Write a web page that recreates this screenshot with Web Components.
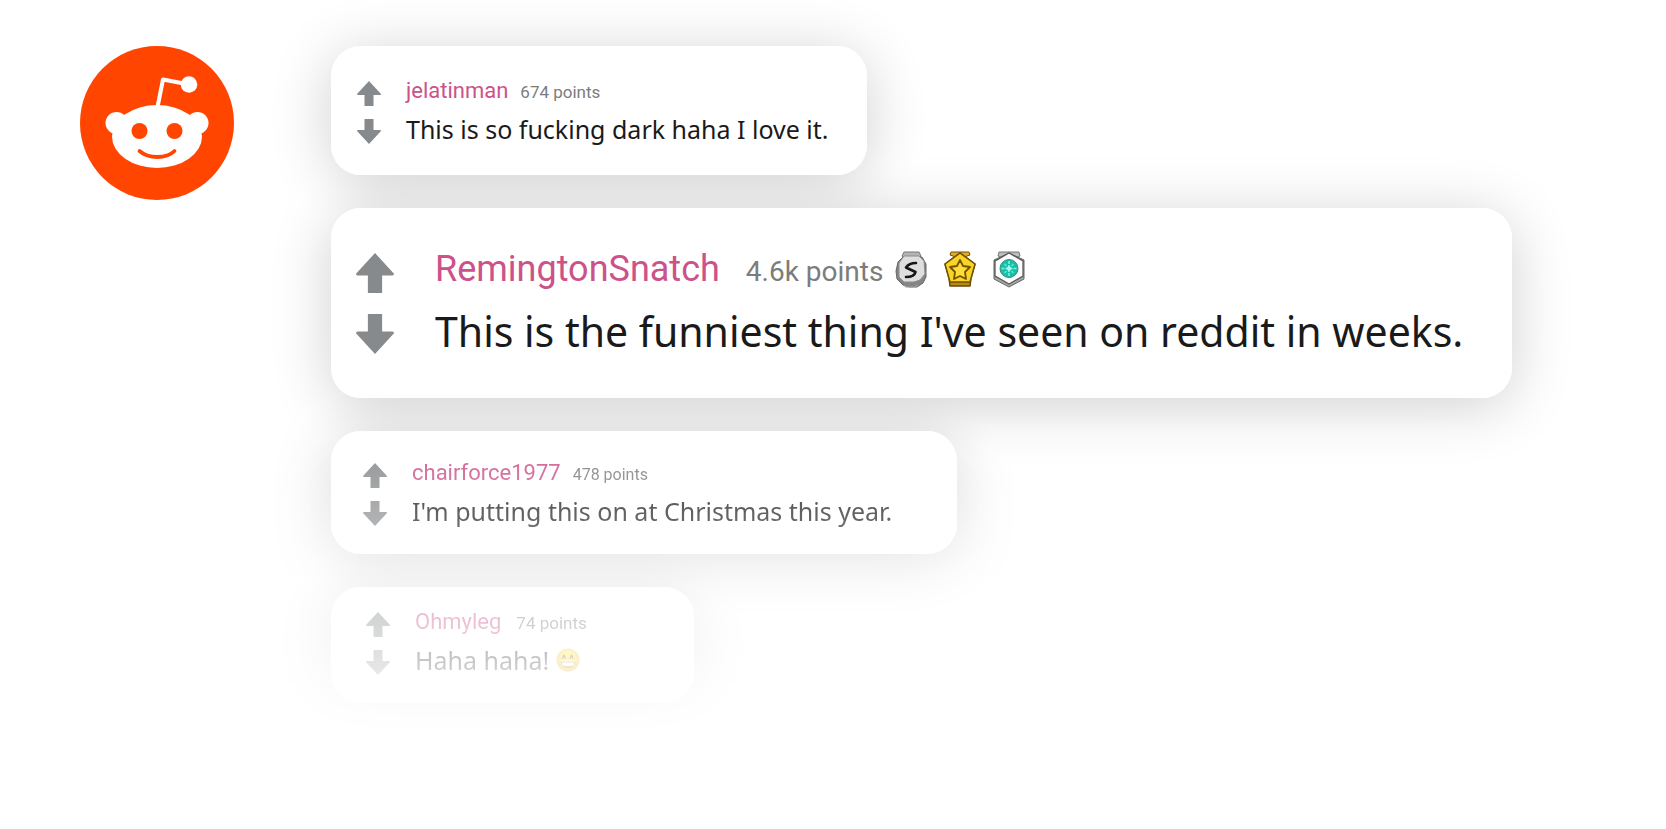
<!DOCTYPE html>
<html lang="en">
<head>
<meta charset="utf-8">
<meta name="viewport" content="width=device-width, initial-scale=1">
<title>Reddit comments</title>
<style>
    body {
        background: #fff;
        margin: 0;
    }
</style>
</head>
<body>
<comment-page>
    <reddit-logo slot="logo"></reddit-logo>
    <reddit-comment author="jelatinman" points="674">This is so fucking dark haha I love it.</reddit-comment>
    <reddit-comment class="featured" author="RemingtonSnatch" points="4.6k">
        <award-badge slot="awards" kind="silver"></award-badge>
        <award-badge slot="awards" kind="gold"></award-badge>
        <award-badge slot="awards" kind="platinum"></award-badge>
        This is the funniest thing I've seen on reddit in weeks.
    </reddit-comment>
    <reddit-comment class="third" author="chairforce1977" points="478">I'm putting this on at Christmas this year.</reddit-comment>
    <reddit-comment class="fourth" author="Ohmyleg" points="74">Haha haha! <grin-emoji></grin-emoji></reddit-comment>
</comment-page>

<script>
class CommentPage extends HTMLElement {
    constructor() {
        super();

        this.renderRoot = this.attachShadow({ mode: 'open' });
    }

    connectedCallback() {
        this.renderRoot.innerHTML = `
            <style>
                :host {
                    display: flex;
                    align-items: flex-start;
                    font-family: "Noto Sans", "Open Sans", sans-serif;
                }

                header {
                    flex: none;
                    padding: 46px 0 0 80px;
                }

                /* the side padding leaves room for the shadows inside the mask */
                main {
                    display: flex;
                    flex: 1;
                    flex-direction: column;
                    align-items: flex-start;
                    gap: 33px;
                    padding: 46px 20px 40px 97px;
                    -webkit-mask-image: linear-gradient(#000 410px, transparent 740px);
                    mask-image: linear-gradient(#000 410px, transparent 740px);
                }

                ::slotted(.featured) {
                    --arrow-width: 38px;
                    --arrow-height: 40px;
                    --arrow-gap: 21px;
                    --gutter: 41px;
                    --name-size: 36px;
                    --name-line: 48px;
                    --meta-gap: 26px;
                    --points-size: 28px;
                    --line-gap: 8px;
                    --text-size: 41px;
                    --text-line: 60px;
                    --card-padding: 37px 49px 37px 25px;
                }

                ::slotted(.third) {
                    --points-size: 16px;
                    --card-padding: 26px 65px 23px 32px;
                }

                ::slotted(.fourth) {
                    --meta-gap: 15px;
                    --card-padding: 19px 107px 23px 35px;
                }
            </style>
            <header><slot name="logo"></slot></header>
            <main><slot></slot></main>
        `;
    }
}

window.customElements.define('comment-page', CommentPage);

class RedditLogo extends HTMLElement {
    constructor() {
        super();

        this.renderRoot = this.attachShadow({ mode: 'open' });
    }

    connectedCallback() {
        this.renderRoot.innerHTML = `
            <style>
                :host {
                    display: block;
                    width: 154px;
                }

                svg {
                    display: block;
                    width: 100%;
                }
            </style>
            <svg viewBox="0 0 154 154" role="img" aria-label="Reddit">
                <circle cx="77" cy="77" r="77" fill="#ff4500"/>
                <g fill="#fff">
                    <circle cx="36.500" cy="77" r="11"/>
                    <circle cx="117.500" cy="77" r="11"/>
                    <ellipse cx="77" cy="90.500" rx="45" ry="31.500"/>
                    <circle cx="109" cy="38.500" r="8.300"/>
                </g>
                <path d="M77.500 61 83 33.500 104 37.500" fill="none" stroke="#fff" stroke-width="4" stroke-linejoin="round"/>
                <g fill="#ff4500">
                    <circle cx="59.500" cy="85" r="8"/>
                    <circle cx="94.500" cy="85" r="8"/>
                </g>
                <path d="M59.500 105c9 8 27 8 35 0" fill="none" stroke="#ff4500" stroke-width="3.800" stroke-linecap="round"/>
            </svg>
        `;
    }
}

window.customElements.define('reddit-logo', RedditLogo);

class RedditComment extends HTMLElement {
    constructor() {
        super();

        this.renderRoot = this.attachShadow({ mode: 'open' });
    }

    connectedCallback() {
        const author = this.getAttribute('author');
        const points = this.getAttribute('points');

        this.renderRoot.innerHTML = `
            <style>
                :host {
                    display: block;
                    position: relative;
                }

                /* shadows sit behind every card, so they never darken a neighbour */
                :host::before {
                    border-radius: 30px;
                    box-shadow: 0 8px 60px rgba(0, 0, 0, .19);
                    content: '';
                    inset: 0;
                    position: absolute;
                    z-index: -1;
                }

                article {
                    display: flex;
                    align-items: center;
                    gap: var(--gutter, 25px);
                    background: #fff;
                    border-radius: 30px;
                    padding: var(--card-padding, 29px 38px 26px 26px);
                }

                .votes {
                    display: flex;
                    flex: none;
                    flex-direction: column;
                    gap: var(--arrow-gap, 13px);
                }

                button {
                    background: none;
                    border: 0;
                    color: #878a8c;
                    cursor: pointer;
                    display: block;
                    height: var(--arrow-height, 25px);
                    padding: 0;
                    width: var(--arrow-width, 24px);
                }

                svg {
                    display: block;
                    height: 100%;
                    width: 100%;
                }

                .meta {
                    display: flex;
                    align-items: baseline;
                    font-family: Roboto, "Liberation Sans", sans-serif;
                    height: var(--name-line, 32px);
                    line-height: var(--name-line, 32px);
                    margin-bottom: var(--line-gap, 2px);
                }

                a {
                    color: #cc5289;
                    font-size: var(--name-size, 22px);
                    text-decoration: none;
                }

                .points {
                    color: #7c7c7c;
                    font-size: var(--points-size, 17px);
                    margin-left: var(--meta-gap, 12px);
                }

                .awards {
                    display: flex;
                    align-self: center;
                }

                p {
                    color: #1a1a1b;
                    font-size: var(--text-size, 25px);
                    line-height: var(--text-line, 40px);
                    margin: 0;
                }
            </style>
            <article>
                <div class="votes">
                    <button type="button" aria-label="Upvote">
                        <svg viewBox="0 0 24 25" preserveAspectRatio="none"><path d="M12 0 24 13q0 1-1 1h-6.500v11h-9V14H1q-1 0-1-1z" fill="currentColor"/></svg>
                    </button>
                    <button type="button" aria-label="Downvote">
                        <svg viewBox="0 0 24 25" preserveAspectRatio="none"><path d="M12 25 24 12q0-1-1-1h-6.500V0h-9v11H1q-1 0-1 1z" fill="currentColor"/></svg>
                    </button>
                </div>
                <div>
                    <div class="meta">
                        <a href="#${author}">${author}</a>
                        <span class="points">${points} points</span>
                        <span class="awards"><slot name="awards"></slot></span>
                    </div>
                    <p><slot></slot></p>
                </div>
            </article>
        `;
    }
}

window.customElements.define('reddit-comment', RedditComment);

const awards = {
    silver: `
        <path d="M9 1h15l2 4-3 3H10L7 5z" fill="#b5b5b5" stroke="#777" stroke-width="1"/>
        <path d="M8 6 3 11 1 20l1 8 6 6 6 2h8l6-4 3-6V13l-4-7z" fill="#858585" stroke="#666" stroke-width="1"/>
        <path d="M9 5h15l5 5 1 13-5 6-6 2H9l-5-5V12z" fill="#dedede" stroke="#8b8b8b" stroke-width="1"/>
        <path d="M21 12q-7 0-10 4.500l9.500 4.500q-1 5-9.500 5" fill="none" stroke="#151515" stroke-width="2.600" stroke-linecap="round" stroke-linejoin="round"/>
        <path d="M10 34v2h10l3-2" fill="none" stroke="#aaa"/>
    `,
    gold: `
        <path d="M7 1h18l1 3-6 2h-8L6 4z" fill="#e4ae24" stroke="#71530d" stroke-width="1"/>
        <path d="M16 2 1 13l4 14 1 8h20l1-8 4-14z" fill="#bc8815" stroke="#674908" stroke-width="1.500" stroke-linejoin="round"/>
        <path d="M16 2 1 13l5 18h20l5-18z" fill="#f9d428" stroke="#705300" stroke-width="1.500" stroke-linejoin="round"/>
        <path d="m16 9 3 6 7 1-5 5 1 7-6-3-6 3 1-7-5-5 7-1z" fill="#ffdc37" stroke="#745200" stroke-width="1.800" stroke-linejoin="round"/>
    `,
    platinum: `
        <path d="M6 1h20l1 4-6 3H11L5 5z" fill="#bdbdbd" stroke="#777" stroke-width="1"/>
        <path d="M16 2 1 9v19l15 8 15-8V9z" fill="#a4a7a8" stroke="#666" stroke-width="1"/>
        <path d="M16 2 2 10v15l14 8 14-8V10z" fill="#fff" stroke="#5b5b5b" stroke-width="1.300"/>
        <circle cx="16" cy="17.500" r="9" fill="#18bfa8" stroke="#2c8f84" stroke-width="1"/>
        <path d="M16 10v15M8.500 17.500h15" stroke="#7df0e2" stroke-width="1.600" stroke-dasharray="3 1"/>
        <path d="m11.500 13 2 2M20.500 13l-2 2M11.500 22l2-2M20.500 22l-2-2" stroke="#5ee5d5" stroke-width="1.600"/>
        <path d="m16 14.500 3 3-3 3-3-3z" fill="#a5fbf0"/>
    `,
};

class AwardBadge extends HTMLElement {
    constructor() {
        super();

        this.renderRoot = this.attachShadow({ mode: 'open' });
    }

    connectedCallback() {
        const kind = this.getAttribute('kind');

        this.renderRoot.innerHTML = `
            <style>
                :host {
                    display: block;
                    height: 37px;
                    margin-left: 16px;
                    width: 33px;
                }

                :host(:first-child) {
                    margin-left: 12px;
                }

                svg {
                    display: block;
                    height: 100%;
                    width: 100%;
                }
            </style>
            <svg viewBox="0 0 33 37" role="img" aria-label="${kind} award">${awards[kind]}</svg>
        `;
    }
}

window.customElements.define('award-badge', AwardBadge);

class GrinEmoji extends HTMLElement {
    constructor() {
        super();

        this.renderRoot = this.attachShadow({ mode: 'open' });
    }

    connectedCallback() {
        this.renderRoot.innerHTML = `
            <style>
                :host {
                    display: inline-block;
                    height: 24px;
                    vertical-align: -2px;
                    width: 24px;
                }

                svg {
                    display: block;
                }
            </style>
            <svg viewBox="0 0 24 24" width="24" height="24" role="img" aria-label="Grinning face">
                <defs>
                    <radialGradient id="face" cx=".5" cy=".4" r=".6">
                        <stop offset=".4" stop-color="#fde030"/>
                        <stop offset="1" stop-color="#f3a21c"/>
                    </radialGradient>
                </defs>
                <circle cx="12" cy="12" r="11.500" fill="url(#face)"/>
                <path d="M6.500 10.500 8 7l1.500 3.500M14 10.500 15.500 7l1.500 3.500" fill="none" stroke="#69502b" stroke-width="1.200" stroke-linecap="round" stroke-linejoin="round"/>
                <path d="M5 14h14q-1 6-7 6t-7-6z" fill="#a77b2c"/>
                <path d="M6 14.500h12q0 3-2 3.500H8q-2-.5-2-3.500z" fill="#fff"/>
            </svg>
        `;
    }
}

window.customElements.define('grin-emoji', GrinEmoji);
</script>
</body>
</html>
